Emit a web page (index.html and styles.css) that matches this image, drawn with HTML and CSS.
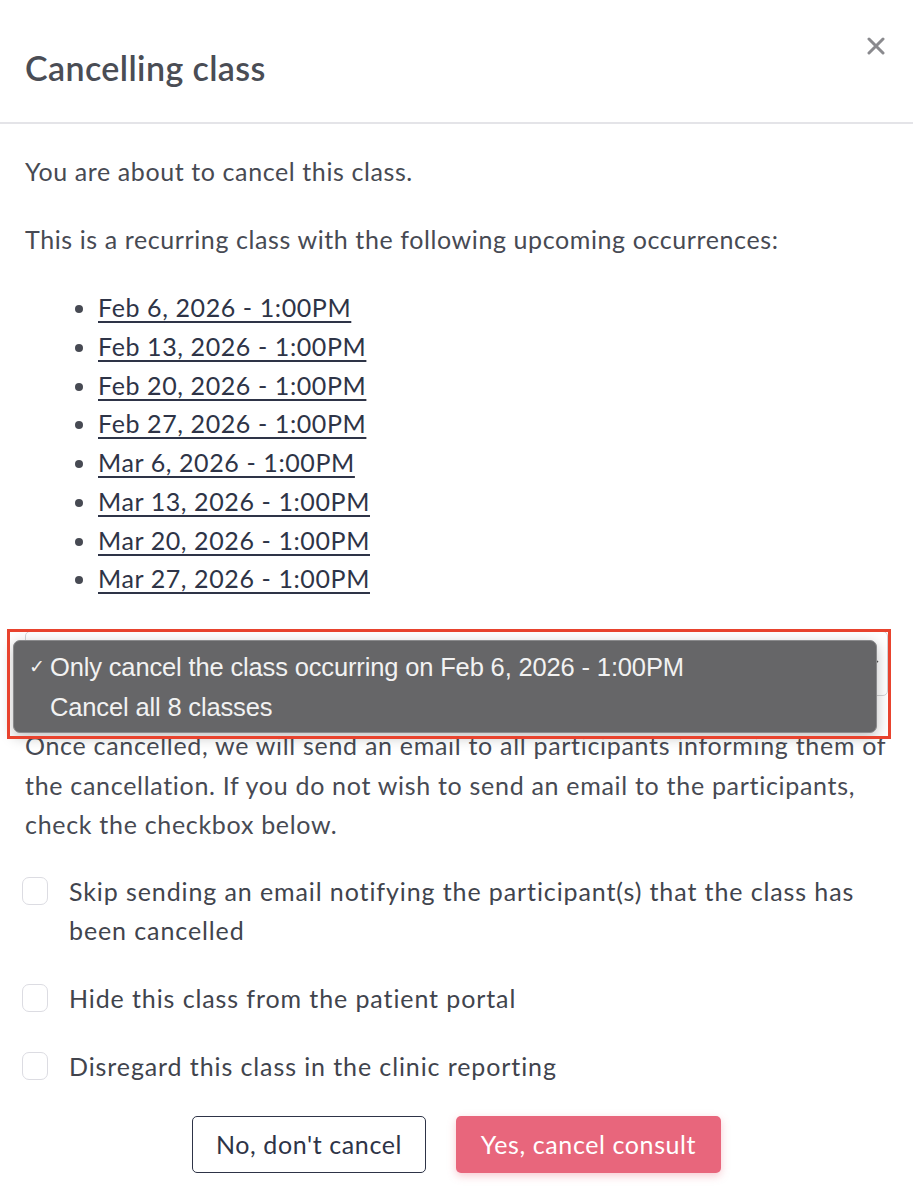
FILE: index.html
```html
<!DOCTYPE html>
<html lang="en">
<head>
<meta charset="utf-8">
<title>Cancelling class</title>
<link rel="stylesheet" href="styles.css">
</head>
<body>
<div class="modal">
  <div class="modal-header">
    <h2 class="modal-title">Cancelling class</h2>
    <button class="close" aria-label="Close">
      <svg width="18" height="18" viewBox="0 0 18 18"><path d="M2 2 L16 16 M16 2 L2 16" stroke="#8a8a8e" stroke-width="3" stroke-linecap="round"/></svg>
    </button>
  </div>
  <div class="modal-body">
    <p class="para">You are about to cancel this class.</p>
    <p class="para">This is a recurring class with the following upcoming occurrences:</p>
    <ul class="occurrences">
      <li><a href="#">Feb 6, 2026 - 1:00PM</a></li>
      <li><a href="#">Feb 13, 2026 - 1:00PM</a></li>
      <li><a href="#">Feb 20, 2026 - 1:00PM</a></li>
      <li><a href="#">Feb 27, 2026 - 1:00PM</a></li>
      <li><a href="#">Mar 6, 2026 - 1:00PM</a></li>
      <li><a href="#">Mar 13, 2026 - 1:00PM</a></li>
      <li><a href="#">Mar 20, 2026 - 1:00PM</a></li>
      <li><a href="#">Mar 27, 2026 - 1:00PM</a></li>
    </ul>
    <div class="select-wrap">
      <div class="select">
        <span class="select-text"></span>
        <svg class="chev" width="10" height="8" viewBox="0 0 10 8"><path d="M1 2 L5 6 L9 2" fill="none" stroke="#555" stroke-width="1.4"/></svg>
      </div>
      <div class="menu">
        <div class="menu-item"><span class="check">✓</span>Only cancel the class occurring on Feb 6, 2026 - 1:00PM</div>
        <div class="menu-item">Cancel all 8 classes</div>
      </div>
      <div class="highlight"></div>
    </div>
    <p class="para notice">Once cancelled, we will send an email to all participants informing them of the cancellation. If you do not wish to send an email to the participants, check the checkbox below.</p>
    <label class="check-row"><span class="box"></span><span class="label">Skip sending an email notifying the participant(s) that the class has been cancelled</span></label>
    <label class="check-row"><span class="box"></span><span class="label">Hide this class from the patient portal</span></label>
    <label class="check-row"><span class="box"></span><span class="label">Disregard this class in the clinic reporting</span></label>
    <div class="actions">
      <button class="btn btn-outline">No, don't cancel</button>
      <button class="btn btn-danger">Yes, cancel consult</button>
    </div>
  </div>
</div>
</body>
</html>
```
FILE: styles.css
```css
* { box-sizing: border-box; }
html, body { margin: 0; padding: 0; background: #fff; }
body {
  font-family: "Lato", "Noto Sans", sans-serif;
  color: #474a53;
  font-size: 25px;
  letter-spacing: 0.6px;
}
.modal { width: 913px; }
.modal-header {
  position: relative;
  padding: 48px 25px 34px;
  border-bottom: 2px solid #e4e4e8;
}
.modal-title {
  margin: 0;
  font-size: 34px;
  line-height: 40px;
  font-weight: 600;
  letter-spacing: 0.4px;
  color: #4a4d55;
}
.close {
  position: absolute;
  top: 37px;
  right: 28px;
  border: 0;
  background: none;
  padding: 0;
  width: 18px;
  height: 18px;
}
.modal-body { padding: 28px 25px 40px; }
.para { margin: 0 0 29px; line-height: 39px; }
.occurrences {
  margin: 0 0 33px;
  padding-left: 73px;
  line-height: 38.75px;
}
.occurrences li::marker { color: #474a53; }
.occurrences a { color: #2e3447; text-decoration: underline; text-underline-offset: 4px; text-decoration-thickness: 2px; }
.select-wrap { position: relative; margin-bottom: 30px; }
.select {
  height: 65px;
  border: 1px solid #d3d3d6;
  border-radius: 5px;
  display: flex;
  align-items: center;
  justify-content: space-between;
  padding: 0 8px 0 16px;
  color: #474a53;
}
.chev { margin-top: -2px; }
.menu {
  position: absolute;
  left: -12px;
  top: 9px;
  width: 864px;
  height: 93px;
  background: #666668;
  border-radius: 7px;
  border: 1px solid #8a8a8c;
  box-shadow: 0 4px 14px rgba(0,0,0,0.25);
  padding: 6px 0 0 0;
  font-family: "Liberation Sans", "Roboto", sans-serif;
  font-size: 25.5px;
  letter-spacing: -0.15px;
  color: #f2f2f2;
}
.menu-item {
  position: relative;
  height: 40px;
  line-height: 40px;
  padding-left: 36px;
}
.check {
  position: absolute;
  left: 15px;
  top: 0;
  font-size: 19px;
}
.highlight {
  position: absolute;
  left: -18px;
  top: -2px;
  width: 884px;
  height: 110px;
  border: 3px solid #e8432e;
}
.notice { margin-bottom: 27px; line-height: 39.5px; letter-spacing: 0.7px; }
.check-row {
  display: flex;
  align-items: flex-start;
  gap: 21px;
  line-height: 39px;
  margin-bottom: 29px;
  color: #41444d;
  letter-spacing: 0.9px;
}
.check-row:last-of-type { margin-bottom: 30px; }
.box {
  flex: 0 0 auto;
  width: 26px;
  height: 28px;
  margin-left: -3px;
  margin-top: 5.5px;
  border: 1.5px solid #dcdce2;
  border-radius: 7px;
  background: #fff;
}
.label { flex: 1; }
.actions {
  display: flex;
  justify-content: center;
  gap: 30px;
}
.btn {
  height: 57px;
  border-radius: 5px;
  font-family: inherit;
  font-size: 25px;
  letter-spacing: 0.6px;
  padding: 0;
}
.btn-outline {
  width: 234px;
  background: #fff;
  color: #2e3447;
  border: 1.5px solid #2e3447;
}
.btn-danger {
  width: 265px;
  background: #e8667c;
  color: #fff;
  border: 0;
  box-shadow: 0 3px 8px rgba(232,102,124,0.35);
}
```
